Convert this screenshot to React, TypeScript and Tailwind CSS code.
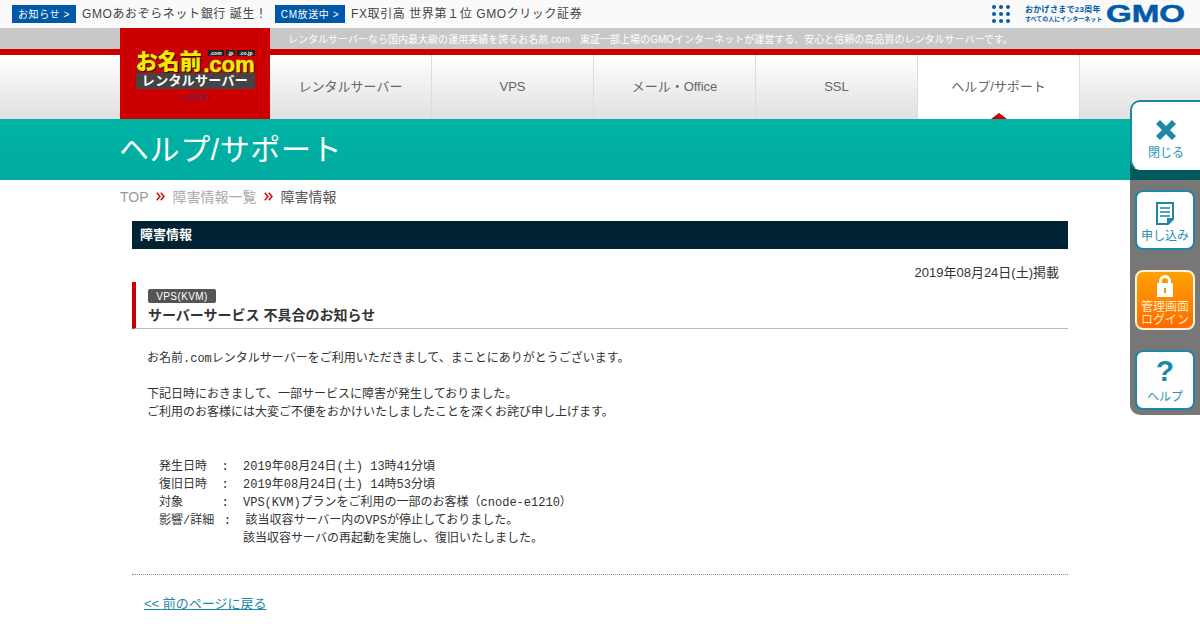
import React from "react";

const navItems = ["レンタルサーバー", "VPS", "メール・Office", "SSL", "ヘルプ/サポート"];

const notice = `お名前.comレンタルサーバーをご利用いただきまして、まことにありがとうございます。

下記日時におきまして、一部サービスに障害が発生しておりました。
ご利用のお客様には大変ご不便をおかけいたしましたことを深くお詫び申し上げます。


　発生日時  :  2019年08月24日(土) 13時41分頃
　復旧日時  :  2019年08月24日(土) 14時53分頃
　対象　　  :  VPS(KVM)プランをご利用の一部のお客様（cnode-e1210）
　影響/詳細 `;

const noticeEnd = `:  該当収容サーバー内のVPSが停止しておりました。`;
const noticeLast = `
　　　　　　　　該当収容サーバの再起動を実施し、復旧いたしました。`;

function Chevrons() {
  return (
    <svg width="9" height="9" viewBox="0 0 9 9" fill="none" stroke="#cc0000" strokeWidth="1.4" className="ml-[7px] mr-[8px]">
      <path d="M0.8 0.8 4 4.5 0.8 8.2M4.8 0.8 8 4.5 4.8 8.2" />
    </svg>
  );
}

function TopBar() {
  return (
    <div className="flex h-[28px] items-center bg-[#fafafa] pl-3 pr-[16px]">
      <span className="flex h-[18px] w-[64px] items-center justify-center bg-[#0058a8] text-[10px] tracking-[0.6px] text-white">お知らせ &gt;</span>
      <span className="ml-[6px] w-[193px] text-xs tracking-[0.6px] text-[#444]">GMOあおぞらネット銀行 誕生！</span>
      <span className="flex h-[18px] w-[70px] items-center justify-center bg-[#0058a8] text-[10px] tracking-[0.6px] text-white">CM放送中 &gt;</span>
      <span className="ml-[6px] text-xs tracking-[0.6px] text-[#444]">FX取引高 世界第１位 GMOクリック証券</span>
      <div className="ml-auto flex items-center">
        <div className="grid grid-cols-3 gap-[3px]">
          {[1, 2, 3, 4, 5, 6, 7, 8, 9].map((n) => (
            <span key={n} className="h-[4px] w-[4px] rounded-full bg-[#005bac]" />
          ))}
        </div>
        <div className="ml-[15px] w-[81px] leading-none text-[#005bac]">
          <div className="text-[8px] font-bold tracking-[0.3px]">おかげさまで23周年</div>
          <div className="mt-[2px] whitespace-nowrap text-[6px] font-bold">すべての人にインターネット</div>
        </div>
        <span className="w-[78px] origin-left scale-x-[1.44] text-[23px] leading-none font-bold text-[#005bac] [-webkit-text-stroke:0.5px_#005bac]">GMO</span>
      </div>
    </div>
  );
}

function Header() {
  return (
    <div className="relative">
      <div className="flex h-[21px] items-center bg-[#c8c8c8] pl-[288px] pt-[1px] text-[10px] tracking-[0.015px] text-white">
        レンタルサーバーなら国内最大級の運用実績を誇るお名前.com　東証一部上場のGMOインターネットが運営する、安心と信頼の高品質のレンタルサーバーです。
      </div>
      <div className="h-[6px] bg-[#cc0000]" />
      <div className="flex h-[64px] bg-gradient-to-b from-white to-[#e0e0e0] pl-[270px]">
        {navItems.map((item, i) => (
          <div
            key={item}
            className={
              i === 4
                ? "relative flex w-[162px] items-center justify-center border-r border-[#dcdcdc] bg-white text-[13px] text-[#666]"
                : "flex w-[162px] items-center justify-center border-r border-[#dcdcdc] text-[13px] text-[#666]"
            }
          >
            {item}
            {i === 4 && (
              <span className="absolute bottom-0 left-1/2 -ml-[8px] border-x-[8px] border-b-[6px] border-x-transparent border-b-[#cc0000]" />
            )}
          </div>
        ))}
      </div>
      <div className="absolute left-[120px] top-0 flex h-[91px] w-[150px] flex-col items-center bg-[#cc0000] pt-[22px]">
        <div className="w-[119px]">
          <div className="flex h-[23px] items-end justify-between">
            <span className="text-[22px] leading-[23px] font-black text-[#ffe600] [text-shadow:1px_1px_0_#222,-1px_0_0_#222]">お名前</span>
            <div className="flex flex-col items-end">
              <div className="flex gap-[2px] text-[5px] leading-[6px] font-bold text-white">
                <span className="bg-[#222] px-[2px]">.com</span>
                <span className="bg-[#222] px-[2px]">.jp</span>
                <span className="bg-[#222] px-[2px]">.co.jp</span>
              </div>
              <span className="text-[22px] leading-[17px] font-bold text-[#ffe600] [text-shadow:1px_1px_0_#222,-1px_0_0_#222] [-webkit-text-stroke:0.5px_#ffe600]">.com</span>
            </div>
          </div>
          <div className="flex h-[16px] items-center justify-center bg-[#444] text-[13px] font-bold tracking-[0.3px] text-white">レンタルサーバー</div>
        </div>
        <div className="mt-[3px] text-[6px] leading-[10px] font-bold text-[#7a1c4a]">
          by<span className="text-[9px]">GMO</span>
        </div>
      </div>
    </div>
  );
}

function Sidebar() {
  return (
    <div className="absolute right-0 top-[100px] w-[70px]">
      <div className="absolute left-0 top-[60px] h-[255px] w-full rounded-bl-[10px] bg-[#777]">
        <div className="h-[20px] bg-[#005a5a]" />
      </div>
      <div className="relative flex h-[70px] flex-col items-center rounded-l-[10px] border-l-2 border-t-2 border-b border-[#1d87a8] border-b-white bg-white pt-[18px] text-[12px] text-[#2a93b3]">
        <svg width="20" height="20" viewBox="0 0 20 20" fill="#1d87a8">
          <path d="M4 0 10 6 16 0 20 4 14 10 20 16 16 20 10 14 4 20 0 16 6 10 0 4Z" />
        </svg>
        <span className="mt-[6px] leading-[14px]">閉じる</span>
      </div>
      <div className="relative mt-[20px] flex flex-col items-center gap-[20px]">
        <div className="flex h-[60px] w-[60px] flex-col items-center rounded-[8px] border-2 border-[#1d87a8] bg-white pt-[10px] text-[12px] text-[#2a93b3]">
          <svg width="20" height="24" viewBox="0 0 20 24" fill="none" stroke="#1d87a8" strokeWidth="2">
            <path d="M2 1H18V17L13 22H2Z" />
            <path d="M5 6H15M5 10H15M5 14H15" strokeWidth="1.5" />
            <path d="M18 17H13V22" fill="#1d87a8" />
          </svg>
          <span className="mt-[3px] leading-[14px] whitespace-nowrap">申し込み</span>
        </div>
        <div className="flex h-[60px] w-[60px] flex-col items-center rounded-[8px] border-2 border-[#fff2d8] bg-gradient-to-b from-[#ffa200] to-[#ff6a00] pt-[3px] text-[12px] text-[#ffe9c8]">
          <svg width="16" height="22" viewBox="0 0 16 22" fill="white">
            <path fillRule="evenodd" d="M2 8V6a6 6 0 0 1 12 0v2h2v14H0V8Zm3 0h6V6a3 3 0 0 0-6 0Zm2 5v5h2v-5Z" />
          </svg>
          <span className="mt-[4px] leading-[13px] whitespace-nowrap">管理画面</span>
          <span className="leading-[13px] whitespace-nowrap">ログイン</span>
        </div>
        <div className="flex h-[60px] w-[60px] flex-col items-center rounded-[8px] border-2 border-[#1d87a8] bg-white text-[12px] text-[#2a93b3]">
          <span className="mt-[2px] text-[30px] leading-[34px] font-black text-[#1d87a8]">?</span>
          <span className="mt-[2px] leading-[14px]">ヘルプ</span>
        </div>
      </div>
    </div>
  );
}

export default function App() {
  return (
    <div className="relative h-[630px] w-[1200px] overflow-hidden bg-white font-['Liberation_Sans','Noto_Sans_CJK_JP',sans-serif]">
      <TopBar />
      <Header />
      <div className="flex h-[61px] items-center bg-gradient-to-b from-[#00b3a5] to-[#00ab9f] pl-[119px] text-[30px] tracking-[0.6px] text-white">
        ヘルプ/サポート
      </div>
      <div className="flex h-[35px] items-center pb-[2px] pl-[120px] text-sm">
        <span className="text-[#999]">TOP</span>
        <Chevrons />
        <span className="text-[#aaa]">障害情報一覧</span>
        <Chevrons />
        <span className="text-[#555]">障害情報</span>
      </div>
      <div className="mx-[132px] mt-[6px]">
        <h2 className="flex h-[28px] items-center bg-[#002333] pl-2 text-[13px] font-bold text-white">障害情報</h2>
        <p className="mt-[15px] pr-[9px] text-right text-[13px] leading-[17px] text-[#333]">2019年08月24日(土)掲載</p>
        <div className="mt-[1px] h-[47px] border-b border-l-[4px] border-b-[#bbb] border-l-[#cc0000] pl-3 pt-[7px]">
          <div className="flex h-[14px] w-[68px] items-center justify-center rounded-[2px] bg-[#555] text-[10px] tracking-[0.4px] text-white">VPS(KVM)</div>
          <h3 className="mt-[2px] text-sm leading-[20px] font-bold text-[#333]">サーバーサービス 不具合のお知らせ</h3>
        </div>
        <pre className="mt-[21px] pl-[15px] font-['Liberation_Mono','Noto_Sans_CJK_JP',monospace] text-xs leading-[18px] text-[#333]">
          {notice}
          <span className="ml-[2.4px]">{noticeEnd}</span>
          {noticeLast}
        </pre>
        <div className="mt-[26px] border-t border-dotted border-[#888]" />
        <a className="ml-3 mt-[20px] inline-block text-[13px] leading-[18px] text-[#1d87a8] underline">&lt;&lt; 前のページに戻る</a>
      </div>
      <Sidebar />
    </div>
  );
}
